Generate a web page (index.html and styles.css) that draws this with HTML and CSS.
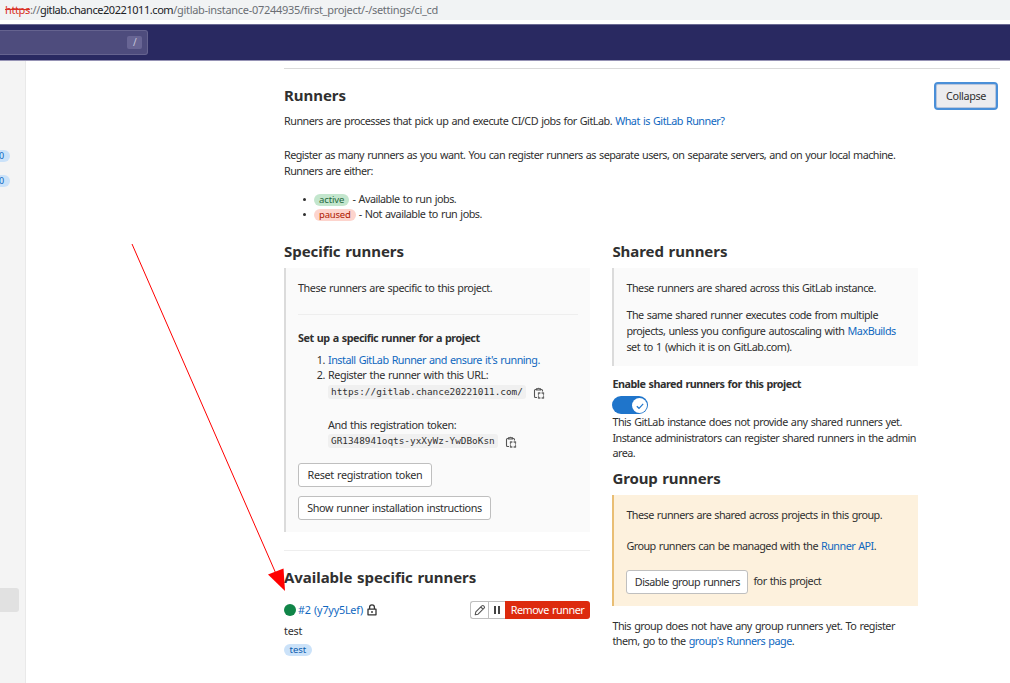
FILE: index.html
```
<!DOCTYPE html>
<html lang="en">
<head>
<meta charset="utf-8">
<title>CI/CD Settings</title>
<link rel="stylesheet" href="styles.css">
</head>
<body>
<svg class="defs" width="0" height="0">
  <symbol id="copy" viewBox="0 0 12 12"><path d="M4 10.500H2.500A1 1 0 0 1 1.500 9.500V3.500A1 1 0 0 1 2.500 2.500H3M8 2.500h.5a1 1 0 0 1 1 1v1M3.500 3V1.800h1.200a.9.9 0 0 1 1.600 0h1.200V3z" fill="none" stroke="#555" stroke-width="1.100"/><path d="M5.500 7.500v-1.500h1.500M9 6h1.500v1.500M10.500 9.500V11H9M7 11H5.500V9.500" fill="none" stroke="#333" stroke-width="1.200"/><path d="M5.500 6h5v5h-5z" fill="none" stroke="#777" stroke-width=".7"/></symbol>
</svg>
<div class="address"><span class="bad"><s>https</s></span><span>://</span><span class="host">gitlab.chance20221011.com</span><span class="path">/gitlab-instance-07244935/first_project/-/settings/ci_cd</span></div>
<header class="navbar"><div class="search"><kbd>/</kbd></div></header>
<div class="page">
  <aside class="sidebar">
    <span class="count">0</span>
    <span class="count">0</span>
    <div class="current"></div>
  </aside>
  <main>
    <section class="intro">
      <div class="title-row"><h2>Runners</h2><button class="collapse">Collapse</button></div>
      <p class="lead">Runners are processes that pick up and execute CI/CD jobs for GitLab. <a>What is GitLab Runner?</a></p>
      <p class="about">Register as many runners as you want. You can register runners as separate users, on separate servers, and on your local machine.<br>Runners are either:</p>
      <ul class="states">
        <li><span class="badge green">active</span> - Available to run jobs.</li>
        <li><span class="badge red">paused</span> - Not available to run jobs.</li>
      </ul>
    </section>
    <div class="columns">
      <section class="col">
        <h2>Specific runners</h2>
        <div class="card specific">
          <p class="loose">These runners are specific to this project.</p>
          <hr>
          <h3>Set up a specific runner for a project</h3>
          <ol>
            <li><a>Install GitLab Runner and ensure it's running.</a></li>
            <li><span class="loose">Register the runner with this URL:</span>
              <div class="copy-row url"><code>https://gitlab.chance20221011.com/</code><svg class="copy"><use href="#copy"/></svg></div>
              <div class="token-label loose">And this registration token:</div>
              <div class="copy-row"><code>GR1348941oqts-yxXyWz-YwDBoKsn</code><svg class="copy"><use href="#copy"/></svg></div>
            </li>
          </ol>
          <button class="btn reset">Reset registration token</button>
          <button class="btn show">Show runner installation instructions</button>
        </div>
        <hr class="divider">
        <h2>Available specific runners</h2>
        <div class="runner">
          <i class="dot"></i><a class="runner-id">#2 (y7yy5Lef)</a>
          <svg class="lock" viewBox="0 0 10 12"><path d="M2.6 5V3.3a2.4 2.4 0 0 1 4.8 0V5M1 5.200h8v5.600H1z" fill="none" stroke="#333" stroke-width="1.300" stroke-linejoin="round"/><path d="M5 7v2" stroke="#333" stroke-width="1.400"/></svg>
          <div class="actions">
            <span class="act"><svg width="12" height="12" viewBox="0 0 12 12"><path d="M1.200 10.800l.6-2.900 6-6a1.300 1.300 0 0 1 1.900 0l.4.4a1.300 1.300 0 0 1 0 1.900l-6 6zM6.800 3l2.200 2.200" fill="none" stroke="#555" stroke-width="1.100" stroke-linejoin="round"/></svg></span>
            <span class="act"><svg width="8" height="8" viewBox="0 0 8 8"><path d="M1 0h2v8H1zM5 0h2v8H5z" fill="#444"/></svg></span>
            <span class="remove">Remove runner</span>
          </div>
        </div>
        <p class="desc">test</p>
        <span class="badge blue">test</span>
      </section>
      <section class="col">
        <h2>Shared runners</h2>
        <div class="card shared">
          <p>These runners are shared across this GitLab instance.</p>
          <p class="second">The same shared runner executes code from multiple<br>projects, unless you configure autoscaling with <a>MaxBuilds</a><br><span class="loose">set to 1 (which it is on GitLab.com).</span></p>
        </div>
        <h3 class="enable">Enable shared runners for this project</h3>
        <div class="toggle"><span class="knob"><svg width="10" height="10" viewBox="0 0 10 10"><path d="M1.800 5.200L4 7.300 8.200 2.900" fill="none" stroke="#1f75cb" stroke-width="1.200"/></svg></span></div>
        <p>This GitLab instance does not provide any shared runners yet.<br><span class="tight">Instance administrators can register shared runners in the admin</span><br>area.</p>
        <h2 class="group-title">Group runners</h2>
        <div class="card group">
          <p class="tight">These runners are shared across projects in this group.</p>
          <p class="api tight">Group runners can be managed with the <a>Runner API</a>.</p>
          <div class="disable"><button class="btn">Disable group runners</button><span>for this project</span></div>
        </div>
        <p class="none">This group does not have any group runners yet. To register<br>them, go to the <a>group's Runners page</a>.</p>
      </section>
    </div>
  </main>
</div>
<svg class="arrow" width="170" height="360" viewBox="0 0 170 360"><path d="M6 4L151 336" stroke="#f00" stroke-width="1"/><path d="M142 334.500L157.500 328.500 159 351z" fill="#f00"/></svg>
</body>
</html>
```
FILE: styles.css
```
* { box-sizing: border-box; }
body { margin: 0; height: 683px; overflow: hidden; position: relative; background: #fff; color: #303030; font: 10.8px/15.7px "Noto Sans", sans-serif; letter-spacing: -0.5px; word-spacing: 0.8px; white-space: nowrap; }
.defs { position: absolute; }
p, h2, h3, ul, ol { margin: 0; padding: 0; }
a { color: #1068bf; }
hr { margin: 0; border: 0; border-top: 1px solid #eee; }
h2 { font-size: 15px; line-height: 20px; font-weight: 700; letter-spacing: -0.05px; }
h3 { font-size: 10.8px; line-height: 16px; font-weight: 700; }
button { font: inherit; letter-spacing: inherit; word-spacing: inherit; color: inherit; margin: 0; }
.loose { letter-spacing: -0.44px; }
.tight { letter-spacing: -0.53px; }
.address { height: 20px; padding-left: 5px; font-size: 11px; line-height: 19px; letter-spacing: -0.38px; background: #f1f3f4; color: #6b6f74; }
.bad { color: #d93025; }
.host { color: #202124; letter-spacing: -0.44px; }
.path { letter-spacing: -0.3px; }
.navbar { height: 37px; margin-top: 4px; background: #292961; border-top: 1px solid #6b6a93; border-bottom: 1px solid #9693b5; padding-top: 5px; }
.search { width: 148px; height: 25px; background: #4e4c7d; border: 1px solid #65638f; border-left: 0; border-radius: 0 3px 3px 0; display: flex; justify-content: flex-end; padding: 5px 5px 0 0; }
kbd { width: 15px; height: 13px; border-radius: 2px; background: #686594; color: #c6c5da; font: 10px/13px "Noto Sans", sans-serif; text-align: center; }
.page { display: flex; height: 622px; }
.sidebar { width: 26px; background: #f4f4f4; border-right: 1px solid #e9e9e9; display: flex; flex-direction: column; padding-top: 89px; }
.count { width: 10px; height: 12px; margin-bottom: 13px; border-radius: 0 6px 6px 0; background: #cbe2f9; color: #1068bf; font-size: 9px; line-height: 12px; text-indent: -1px; }
.current { width: 19px; height: 24px; margin-top: 388px; background: #e1e1e1; border-radius: 0 3px 3px 0; }
main { width: 716px; margin: 7px 0 0 258px; border-top: 1px solid #dbdbdb; }
.title-row { display: flex; justify-content: space-between; padding: 13px 2px 0 0; height: 44px; }
.title-row h2 { padding-top: 3px; }
.collapse { width: 64px; height: 28px; padding: 0; border: 2px solid #4a8fd8; border-radius: 4px; background: #ececef; box-shadow: inset 0 0 0 1px #b9c6dc; letter-spacing: -0.37px; }
.about { margin-top: 18.5px; letter-spacing: -0.535px; }
.states { margin-top: 12px; padding-left: 30px; list-style: none; }
.states li::before { content: ""; float: left; width: 3px; height: 3px; margin: 7px 0 0 -11px; border-radius: 50%; background: #303030; }
.badge { display: inline-block; height: 12px; padding: 0 5px; border-radius: 6px; font-size: 9.5px; line-height: 12px; letter-spacing: -0.1px; }
.green { background: #c3e6cd; color: #24663b; }
.red { background: #fdd4cd; color: #ae1800; letter-spacing: -0.2px; }
.blue { background: #cbe2f9; color: #0b5cad; padding: 0 5.5px; letter-spacing: 0; }
.columns { display: flex; gap: 22.4px; margin-top: 19px; }
.col { width: 306px; }
.col + .col { width: 305.5px; }
.card { margin-top: 7px; border-left: 2px solid #dbdbdb; background: #fafafa; padding: 12px 12px 0; }
.specific { height: 264px; }
.card hr { margin-top: 18px; }
.card h3 { margin-top: 15px; }
ol { margin-top: 6px; padding-left: 30px; }
.copy-row { display: flex; align-items: center; height: 16px; }
.url { margin-top: 1px; }
code { font: 9.4px/14px "DejaVu Sans Mono", monospace; letter-spacing: 0; background: #f0f0f0; padding: 0 3px; border-radius: 3px; }
.copy { width: 12px; height: 12px; margin-left: 7px; margin-top: 2px; }
.token-label { margin-top: 17px; }
.btn { display: block; height: 24px; padding: 0; border: 1px solid #bfbfbf; border-radius: 3px; background: #fff; width: 122px; }
.reset { width: 134px; margin-top: 14px; letter-spacing: -0.35px; }
.show { width: 193px; margin-top: 9px; letter-spacing: -0.4px; }
.divider { margin: 18px 0 16px; }
.runner { display: flex; align-items: center; height: 18px; margin-top: 14px; }
.runner-id { letter-spacing: -0.22px; }
.dot { width: 12px; height: 12px; margin-right: 2px; border-radius: 50%; background: #108548; }
.lock { width: 10px; height: 12px; margin-left: 4px; }
.actions { display: flex; margin-left: auto; height: 18px; }
.act { width: 17px; border: 1px solid #bfbfbf; border-right: 0; background: #fff; display: flex; align-items: center; justify-content: center; }
.act:first-child { width: 18px; border-radius: 3px 0 0 3px; }
.remove { width: 85px; line-height: 18px; text-align: center; background: #dd2b0e; color: #fff; border-radius: 0 3px 3px 0; letter-spacing: -0.45px; }
.desc { margin: 4px 0 2px; letter-spacing: -0.2px; }
.shared { height: 98px; }
.second { margin-top: 11.5px; }
.enable { margin-top: 10px; }
.toggle { width: 36px; height: 18px; margin: 4px 0 0; border-radius: 9px; background: #1f75cb; padding: 2px 1px; display: flex; justify-content: flex-end; }
.knob { width: 15px; height: 15px; border-radius: 50%; background: #fff; display: flex; align-items: center; justify-content: center; }
.group-title { margin-top: 7px; letter-spacing: -0.12px; }
.group { height: 111px; background: #fdf1dd; border-color: #e9be74; }
.api { margin-top: 15px; }
.disable { display: flex; gap: 5px; margin-top: 16px; line-height: 22px; }
.none { margin-top: 11.5px; }
.arrow { position: absolute; left: 126px; top: 240px; }
```
